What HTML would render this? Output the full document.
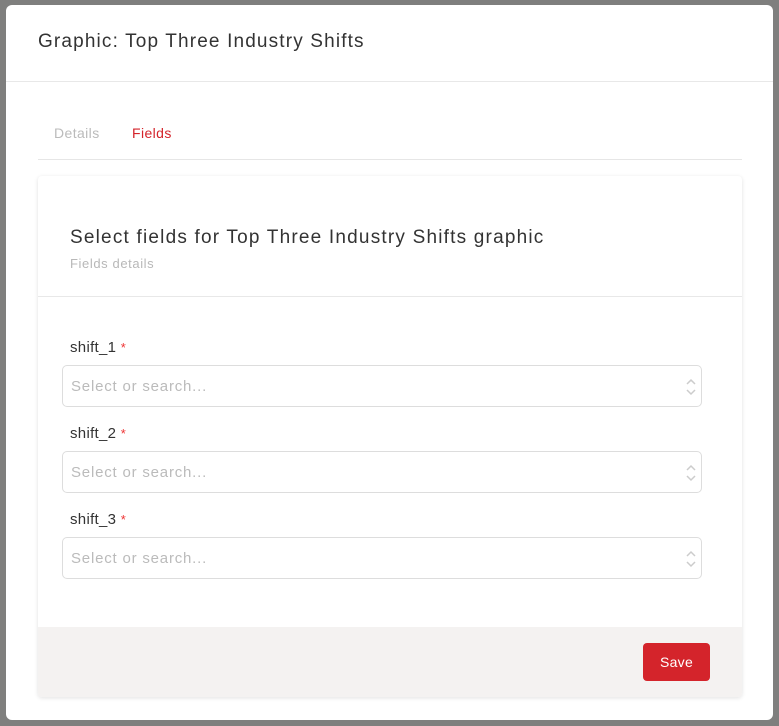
<!DOCTYPE html>
<html><head><style>
*{box-sizing:border-box;margin:0;padding:0}
body{width:779px;height:726px;background:#7f7f7e;font-family:"Liberation Sans",sans-serif;position:relative;overflow:hidden}
.modal{position:absolute;left:6px;top:5px;width:767px;height:715px;background:#fff;border-radius:6px}
.title{position:absolute;left:32px;top:26px;font-size:19px;color:#333;letter-spacing:1.15px}
.hr1{position:absolute;left:0;right:0;top:76px;border-top:1px solid #e8e8e8}
.tab{position:absolute;top:120px;font-size:14px;letter-spacing:0.4px}
.hr2{position:absolute;left:32px;width:704px;top:154px;border-top:1px solid #e6e6e6}
.card{position:absolute;left:32px;top:171px;width:704px;height:521px;background:#fff;border-radius:4px;box-shadow:0 1px 4px rgba(0,0,0,.12);overflow:hidden}
.ct{position:absolute;left:32px;top:51px;font-size:19px;color:#333;letter-spacing:1.2px}
.cs{position:absolute;left:32px;top:80px;font-size:13px;color:#b8b8b8;letter-spacing:0.6px}
.hr3{position:absolute;left:0;right:0;top:120px;border-top:1px solid #e8e8e8}
.lab{position:absolute;left:32px;font-size:15px;color:#333;letter-spacing:0.3px}
.lab span{color:#e33;font-size:13px}
.sel{position:absolute;left:24px;width:640px;height:42px;border:1px solid #ddd;border-radius:5px;font-size:15px;color:#bbb;padding:12px 0 0 8px;letter-spacing:0.8px}
.sel svg{position:absolute;right:4px;top:12px}
.foot{position:absolute;left:0;right:0;top:451px;height:70px;background:#f4f2f1}
.btn{position:absolute;left:605px;top:16px;width:67px;height:38px;background:#d4242b;border-radius:4px;color:#fff;font-size:14px;text-align:center;line-height:38px;letter-spacing:0.3px}
</style></head><body>
<div class="modal">
<div class="title">Graphic: Top Three Industry Shifts</div>
<div class="hr1"></div>
<div class="tab" style="left:48px;color:#bbb">Details</div>
<div class="tab" style="left:126px;color:#d4242b">Fields</div>
<div class="hr2"></div>
<div class="card">
<div class="ct">Select fields for Top Three Industry Shifts graphic</div>
<div class="cs">Fields details</div>
<div class="hr3"></div>
<div class="lab" style="top:163px">shift_1 <span>*</span></div>
<div class="sel" style="top:189px">Select or search...<svg width="12" height="18" viewBox="0 0 12 18"><path d="M2 6l4-4 4 4M2 12l4 4 4-4" fill="none" stroke="#ccc" stroke-width="1.5"/></svg></div>
<div class="lab" style="top:249px">shift_2 <span>*</span></div>
<div class="sel" style="top:275px">Select or search...<svg width="12" height="18" viewBox="0 0 12 18"><path d="M2 6l4-4 4 4M2 12l4 4 4-4" fill="none" stroke="#ccc" stroke-width="1.5"/></svg></div>
<div class="lab" style="top:335px">shift_3 <span>*</span></div>
<div class="sel" style="top:361px">Select or search...<svg width="12" height="18" viewBox="0 0 12 18"><path d="M2 6l4-4 4 4M2 12l4 4 4-4" fill="none" stroke="#ccc" stroke-width="1.5"/></svg></div>
<div class="foot"><div class="btn">Save</div></div>
</div>
</div>
</body></html>
